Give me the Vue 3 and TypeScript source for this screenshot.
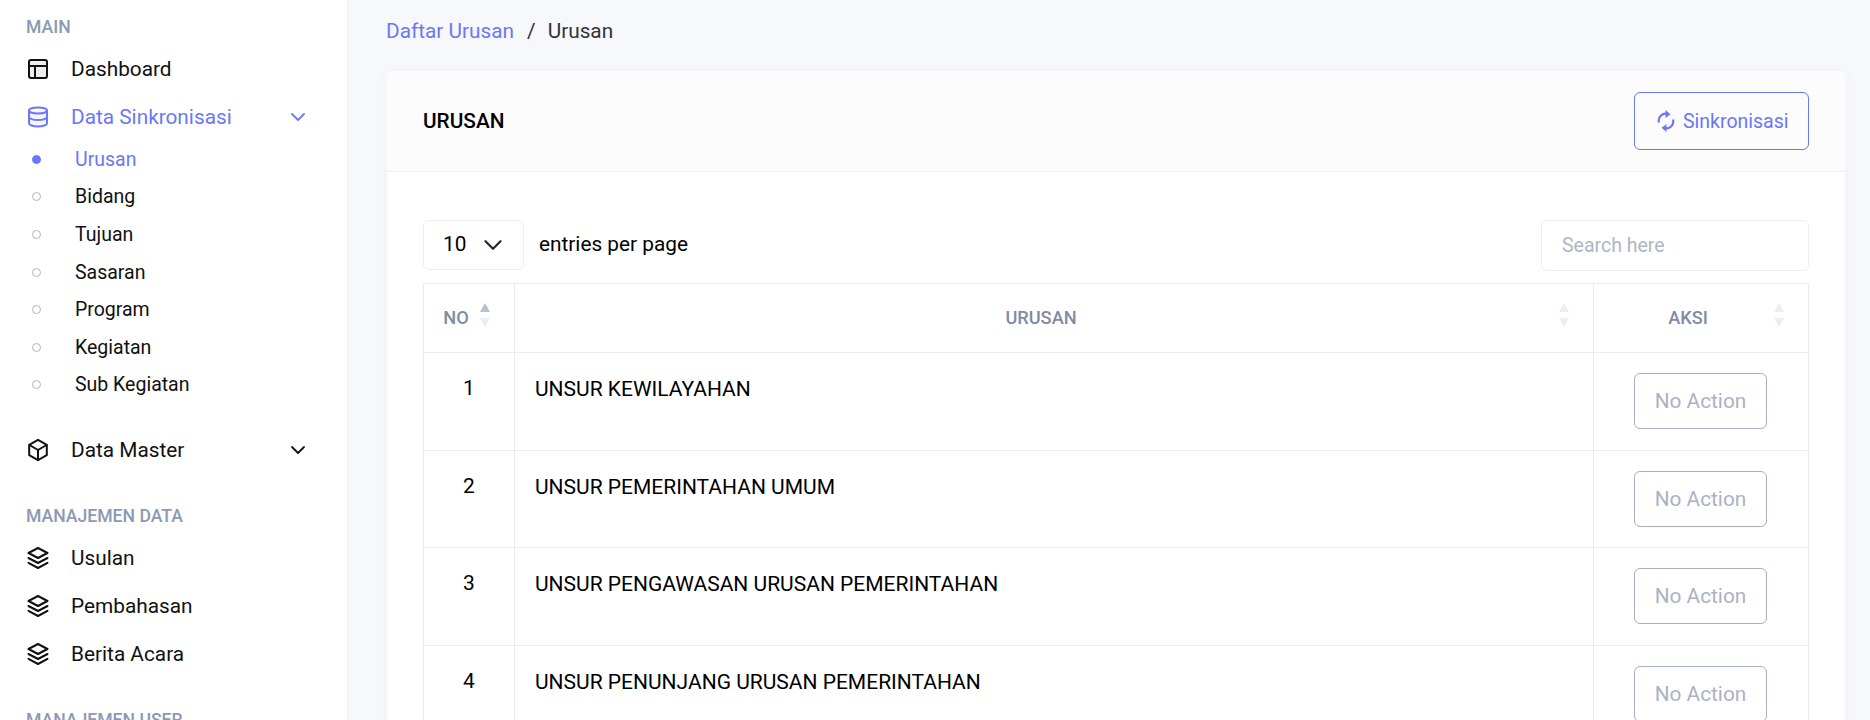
<script setup lang="ts">
const subMenus = ['Urusan', 'Bidang', 'Tujuan', 'Sasaran', 'Program', 'Kegiatan', 'Sub Kegiatan']
const dataMenus = ['Usulan', 'Pembahasan', 'Berita Acara']
const rows = [
  { no: 1, name: 'UNSUR KEWILAYAHAN' },
  { no: 2, name: 'UNSUR PEMERINTAHAN UMUM' },
  { no: 3, name: 'UNSUR PENGAWASAN URUSAN PEMERINTAHAN' },
  { no: 4, name: 'UNSUR PENUNJANG URUSAN PEMERINTAHAN' },
]
</script>

<template>
  <div class="page">
    <aside class="sidebar">
      <h4 class="menu-title first">MAIN</h4>
      <a class="menu-item">
        <svg class="menu-icon" viewBox="0 0 24 24">
          <rect x="3" y="3" width="18" height="18" rx="2" class="tint" />
          <path d="M3 9h18M9 9v12" />
        </svg>
        <span>Dashboard</span>
      </a>
      <a class="menu-item active">
        <svg class="menu-icon" viewBox="0 0 24 24">
          <path class="tint" d="M3 5.5v13C3 20 7 21.500 12 21.500s9-1.500 9-3v-13" />
          <ellipse cx="12" cy="5.500" rx="9" ry="3" />
          <path d="M3 12c0 1.600 4 3 9 3s9-1.400 9-3" />
        </svg>
        <span>Data Sinkronisasi</span>
        <svg class="chevron" viewBox="0 0 24 24"><path d="M6 9l6 6 6-6" /></svg>
      </a>
      <ul class="sub-menu">
        <li v-for="(item, i) in subMenus" :key="item" :class="{ active: i === 0 }">
          <span class="dot"></span>{{ item }}
        </li>
      </ul>
      <a class="menu-item master">
        <svg class="menu-icon" viewBox="0 0 24 24">
          <path d="M12 1.800l8.800 5v10.400L12 22.200l-8.800-5V6.800z" />
          <path d="M3.500 7L12 12l8.500-5M12 12v10" />
        </svg>
        <span>Data Master</span>
        <svg class="chevron" viewBox="0 0 24 24"><path d="M6 9l6 6 6-6" /></svg>
      </a>
      <h4 class="menu-title">MANAJEMEN DATA</h4>
      <a v-for="item in dataMenus" :key="item" class="menu-item">
        <svg class="menu-icon layers" viewBox="0 0 24 24">
          <path d="M12 2l9.500 5-9.500 5-9.500-5z" />
          <path d="M2.500 12l9.500 5 9.500-5" />
          <path d="M2.500 16.800l9.500 5.200 9.500-5.200" />
        </svg>
        <span>{{ item }}</span>
      </a>
      <h4 class="menu-title user">MANAJEMEN USER</h4>
    </aside>

    <main class="content">
      <nav class="breadcrumb">
        <a>Daftar Urusan</a>
        <span class="sep">/</span>
        <span>Urusan</span>
      </nav>

      <section class="card">
        <header class="card-header">
          <h3>URUSAN</h3>
          <button class="btn-sync">
            <svg viewBox="0 0 18 24">
              <path d="M2 13.500A7 7 0 0 1 11 5" />
              <path d="M16 10.500A7 7 0 0 1 7 19" />
              <path class="arrow" d="M8.500 1l5 4.200-5 3.800z" />
              <path class="arrow" d="M9.500 23l-5-4.200 5-3.800z" />
            </svg>
            Sinkronisasi
          </button>
        </header>

        <div class="card-body">
          <div class="table-top">
            <div class="per-page">
              <div class="select">
                <span>10</span>
                <svg viewBox="0 0 24 24"><path d="M6 9l6 6 6-6" /></svg>
              </div>
              <span>entries per page</span>
            </div>
            <input class="search" type="text" placeholder="Search here" />
          </div>

          <table>
            <colgroup>
              <col class="col-no" />
              <col />
              <col class="col-aksi" />
            </colgroup>
            <thead>
              <tr>
                <th><span class="th-label">NO</span><i class="sort asc"></i></th>
                <th><span class="th-label">URUSAN</span><i class="sort"></i></th>
                <th><span class="th-label">AKSI</span><i class="sort"></i></th>
              </tr>
            </thead>
            <tbody>
              <tr v-for="row in rows" :key="row.no">
                <td class="no">{{ row.no }}</td>
                <td class="name">{{ row.name }}</td>
                <td class="aksi"><button class="btn-none">No Action</button></td>
              </tr>
            </tbody>
          </table>
        </div>
      </section>
    </main>
  </div>
</template>

<style>
html, body {
  margin: 0;
  overflow: hidden;
  background: #f7f8fb;
}
</style>

<style scoped>
.page {
  display: flex;
  width: 1870px;
  height: 720px;
  overflow: hidden;
  font-family: Roboto, "Liberation Sans", sans-serif;
  color: #000;
  background: #f7f8fb;
}

/* sidebar */
.sidebar {
  flex: none;
  width: 347px;
  height: 720px;
  overflow: hidden;
  background: #fff;
  border-right: 1px solid #eef0f5;
}

.menu-title {
  margin: 0;
  padding-left: 26px;
  font-size: 17.600px;
  line-height: 20px;
  font-weight: 500;
  color: #8a99b5;
}
.menu-title.first { padding-top: 17px; margin-bottom: 8px; }
.menu-title.user { margin-top: 32px; }
.menu-title:not(.first):not(.user) { margin-top: 32px; margin-bottom: 8px; }

.menu-item {
  display: flex;
  align-items: center;
  height: 48px;
  padding-left: 26px;
  font-size: 20.800px;
  color: #111;
}
.menu-item.active { color: #6a77f8; }
.menu-item.master { margin-top: 22px; }

.menu-icon {
  width: 24px;
  height: 24px;
  margin-right: 21px;
  fill: none;
  stroke: currentColor;
  stroke-width: 2;
  stroke-linejoin: round;
  stroke-linecap: round;
  flex: none;
}
.menu-icon .tint { fill: currentColor; fill-opacity: 0.07; }

.chevron {
  width: 24px;
  height: 24px;
  margin-left: auto;
  margin-right: 37px;
  fill: none;
  stroke: currentColor;
  stroke-width: 1.800;
  stroke-linecap: round;
  stroke-linejoin: round;
}

.sub-menu {
  list-style: none;
  margin: -0.500px 0 0;
  padding: 0 0 0 32px;
}
.sub-menu li {
  display: flex;
  align-items: center;
  height: 37.600px;
  font-size: 19.500px;
  color: #111;
}
.sub-menu li.active { color: #6a77f8; }
.dot {
  width: 9px;
  height: 9px;
  margin-right: 34px;
  border: 1px solid #b5b5b5;
  border-radius: 50%;
  box-sizing: border-box;
}
.sub-menu li.active .dot { background: #6a77f8; border-color: #6a77f8; }

/* content */
.content {
  flex: 1;
  min-width: 0;
  padding: 0 25px 0 39px;
}

.breadcrumb {
  display: flex;
  align-items: center;
  height: 62px;
  font-size: 20.800px;
  color: #333;
}
.breadcrumb a { color: #6a77f8; margin-left: -1px; }
.sep { margin: 0 12px 0 13px; }

.card {
  margin-top: 9px;
  background: #fff;
  border-radius: 6px;
  box-shadow: 0 0 8px rgba(90, 100, 140, 0.05);
}

.card-header {
  display: flex;
  align-items: center;
  justify-content: space-between;
  height: 100px;
  padding: 0 36px;
  background: #fcfcfd;
  border-bottom: 1px solid #f1f2f6;
  border-radius: 6px 6px 0 0;
}
.card-header h3 {
  margin: 0;
  font-size: 20.800px;
  font-weight: 500;
  color: #000;
}

.btn-sync {
  display: flex;
  align-items: center;
  gap: 8px;
  width: 175px;
  height: 58px;
  padding: 0 0 0 22px;
  font-family: inherit;
  font-size: 19.500px;
  color: #6a77f8;
  background: transparent;
  border: 1px solid #6a77f8;
  border-radius: 6px;
}
.btn-sync svg {
  width: 18px;
  height: 24px;
  fill: none;
  stroke: currentColor;
  stroke-width: 2.200;
}
.btn-sync .arrow { fill: currentColor; stroke: none; }

.card-body { padding: 48px 36px 0; }

.table-top {
  display: flex;
  align-items: flex-start;
  justify-content: space-between;
  margin-bottom: 12px;
}
.per-page {
  display: flex;
  align-items: center;
  gap: 15px;
  font-size: 20.800px;
}
.per-page span { padding-bottom: 2px; }
.select {
  display: flex;
  align-items: center;
  justify-content: space-between;
  box-sizing: border-box;
  width: 101px;
  height: 50px;
  padding: 0 15px 0 19px;
  border: 1px solid #eceef3;
  border-radius: 6px;
}
.select svg {
  width: 30px;
  height: 30px;
  fill: none;
  stroke: #1f2937;
  stroke-width: 1.800;
  stroke-linecap: round;
  stroke-linejoin: round;
}

.search {
  box-sizing: border-box;
  width: 268px;
  height: 51px;
  padding: 0 20px;
  font-family: inherit;
  font-size: 19.500px;
  border: 1px solid #eceef3;
  border-radius: 6px;
  outline: none;
}
.search::placeholder { color: #aeb6c6; }

table {
  width: 100%;
  table-layout: fixed;
  border-collapse: collapse;
}
.col-no { width: 91px; }
.col-aksi { width: 215px; }
th, td { border: 1px solid #e9ebf0; }
th {
  position: relative;
  height: 69px;
  padding: 0 26px 2px 0;
  box-sizing: border-box;
  font-size: 18.200px;
  font-weight: 500;
  color: #7f8ba5;
}

/* sort arrows */
.sort {
  position: absolute;
  right: 24px;
  top: 19px;
  width: 10px;
  height: 24px;
}
.sort::before, .sort::after {
  content: '';
  position: absolute;
  left: 0;
  border-left: 5px solid transparent;
  border-right: 5px solid transparent;
}
.sort::before { top: 0; border-bottom: 9px solid #eceef3; }
.sort::after { bottom: 0; border-top: 9px solid #eceef3; }
.sort.asc::before { border-bottom-color: #b8bfce; }

td { height: 97.700px; padding: 0; font-size: 21px; box-sizing: border-box; }
td.no { text-align: center; vertical-align: top; padding-top: 23px; }
td.name { vertical-align: top; padding: 24px 0 0 20px; }
td.aksi { vertical-align: top; padding: 20px 0 0 40px; }

.btn-none {
  display: block;
  width: 133px;
  height: 56px;
  padding: 0;
  font-family: inherit;
  font-size: 20.800px;
  color: #aab2c4;
  background: #fff;
  border: 1px solid #a6b0c2;
  border-radius: 6px;
}
</style>
